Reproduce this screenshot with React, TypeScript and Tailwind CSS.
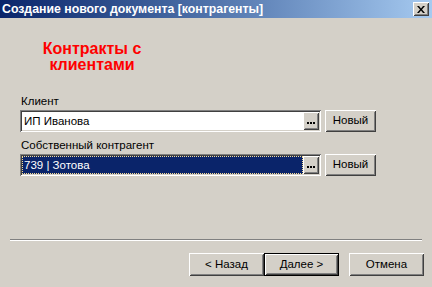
import React from 'react';

const raised =
  'bg-[#d4d0c8] shadow-[inset_1px_1px_#ffffff,inset_-1px_-1px_#404040,inset_2px_2px_#d4d0c8,inset_-2px_-2px_#808080]';
const sunken =
  'shadow-[inset_1px_1px_#808080,inset_-1px_-1px_#ffffff,inset_2px_2px_#404040,inset_-2px_-2px_#d4d0c8]';

const Dots: React.FC = () => (
  <svg width="8" height="2" viewBox="0 0 8 2">
    <rect x="0" y="0" width="2" height="2" fill="#000" />
    <rect x="3" y="0" width="2" height="2" fill="#000" />
    <rect x="6" y="0" width="2" height="2" fill="#000" />
  </svg>
);

const LookupField: React.FC<{ value: string; selected?: boolean }> = ({ value, selected }) => (
  <div className="flex items-center gap-[4px]">
    <div className={`flex w-[301px] h-[22px] p-[2px] bg-white ${sunken}`}>
      <div
        className={`flex-1 flex items-center pl-[2px] text-[11.5px] leading-[13px] ${
          selected ? 'bg-[#0a246a] text-white outline outline-1 outline-dotted outline-[#f5db95] -outline-offset-1' : 'text-black'
        }`}
      >
        {value}
      </div>
      <div className={`w-[16px] h-full flex items-center justify-center pt-[3px] ${raised}`}>
        <Dots />
      </div>
    </div>
    <button className={`w-[51px] h-[22px] text-[11.5px] text-black ${raised}`}>Новый</button>
  </div>
);

const DialogButton: React.FC<{ label: string; isDefault?: boolean }> = ({ label, isDefault }) => (
  <button
    className={`w-[75px] h-[23px] text-[11.5px] text-black ${
      isDefault
        ? 'bg-[#d4d0c8] shadow-[inset_0_0_0_1px_#000000,inset_2px_2px_#ffffff,inset_-2px_-2px_#404040,inset_3px_3px_#d4d0c8,inset_-3px_-3px_#808080]'
        : raised
    }`}
  >
    {label}
  </button>
);

export default function App() {
  return (
    <div
      className="w-[432px] h-[287px] bg-[#d4d0c8] flex flex-col overflow-hidden"
      style={{ fontFamily: '"Liberation Sans", Arial, sans-serif' }}
    >
      {/* Title bar */}
      <div className="h-[18px] flex items-center justify-between pl-[2px] pr-[3px] bg-gradient-to-r from-[#0a246a] to-[#a6caf0]">
        <span className="text-white font-bold text-[12.3px] leading-[14px] whitespace-nowrap">
          Создание нового документа [контрагенты]
        </span>
        <button className={`w-[16px] h-[14px] flex items-center justify-center ${raised}`}>
          <svg width="8" height="7" viewBox="0 0 8 7">
            <path d="M0 0 L2 0 L4 2.5 L6 0 L8 0 L5 3.5 L8 7 L6 7 L4 4.5 L2 7 L0 7 L3 3.5 Z" fill="#000" />
          </svg>
        </button>
      </div>

      {/* Header */}
      <div className="mt-[23px] w-[184px] text-center text-[#ff0000] font-bold text-[16px] leading-[16px]">
        Контракты с<br />клиентами
      </div>

      {/* Form */}
      <div className="pl-[20px] mt-[22px] flex flex-col">
        <div className="pl-[1px] text-[11.5px] leading-[13px] text-black">Клиент</div>
        <div className="mt-[2px]">
          <LookupField value="ИП Иванова" />
        </div>
        <div className="pl-[1px] mt-[7px] text-[11.5px] leading-[13px] text-black">Собственный контрагент</div>
        <div className="mt-[2px]">
          <LookupField value="739 | Зотова" selected />
        </div>
      </div>

      {/* Separator */}
      <div className="mx-[10px] mt-[63px] border-t border-t-[#808080] border-b border-b-white" />

      {/* Buttons */}
      <div className="mt-[12px] flex justify-end pr-[8px]">
        <DialogButton label="< Назад" />
        <DialogButton label="Далее >" isDefault />
        <div className="w-[10px]" />
        <DialogButton label="Отмена" />
      </div>
    </div>
  );
}
